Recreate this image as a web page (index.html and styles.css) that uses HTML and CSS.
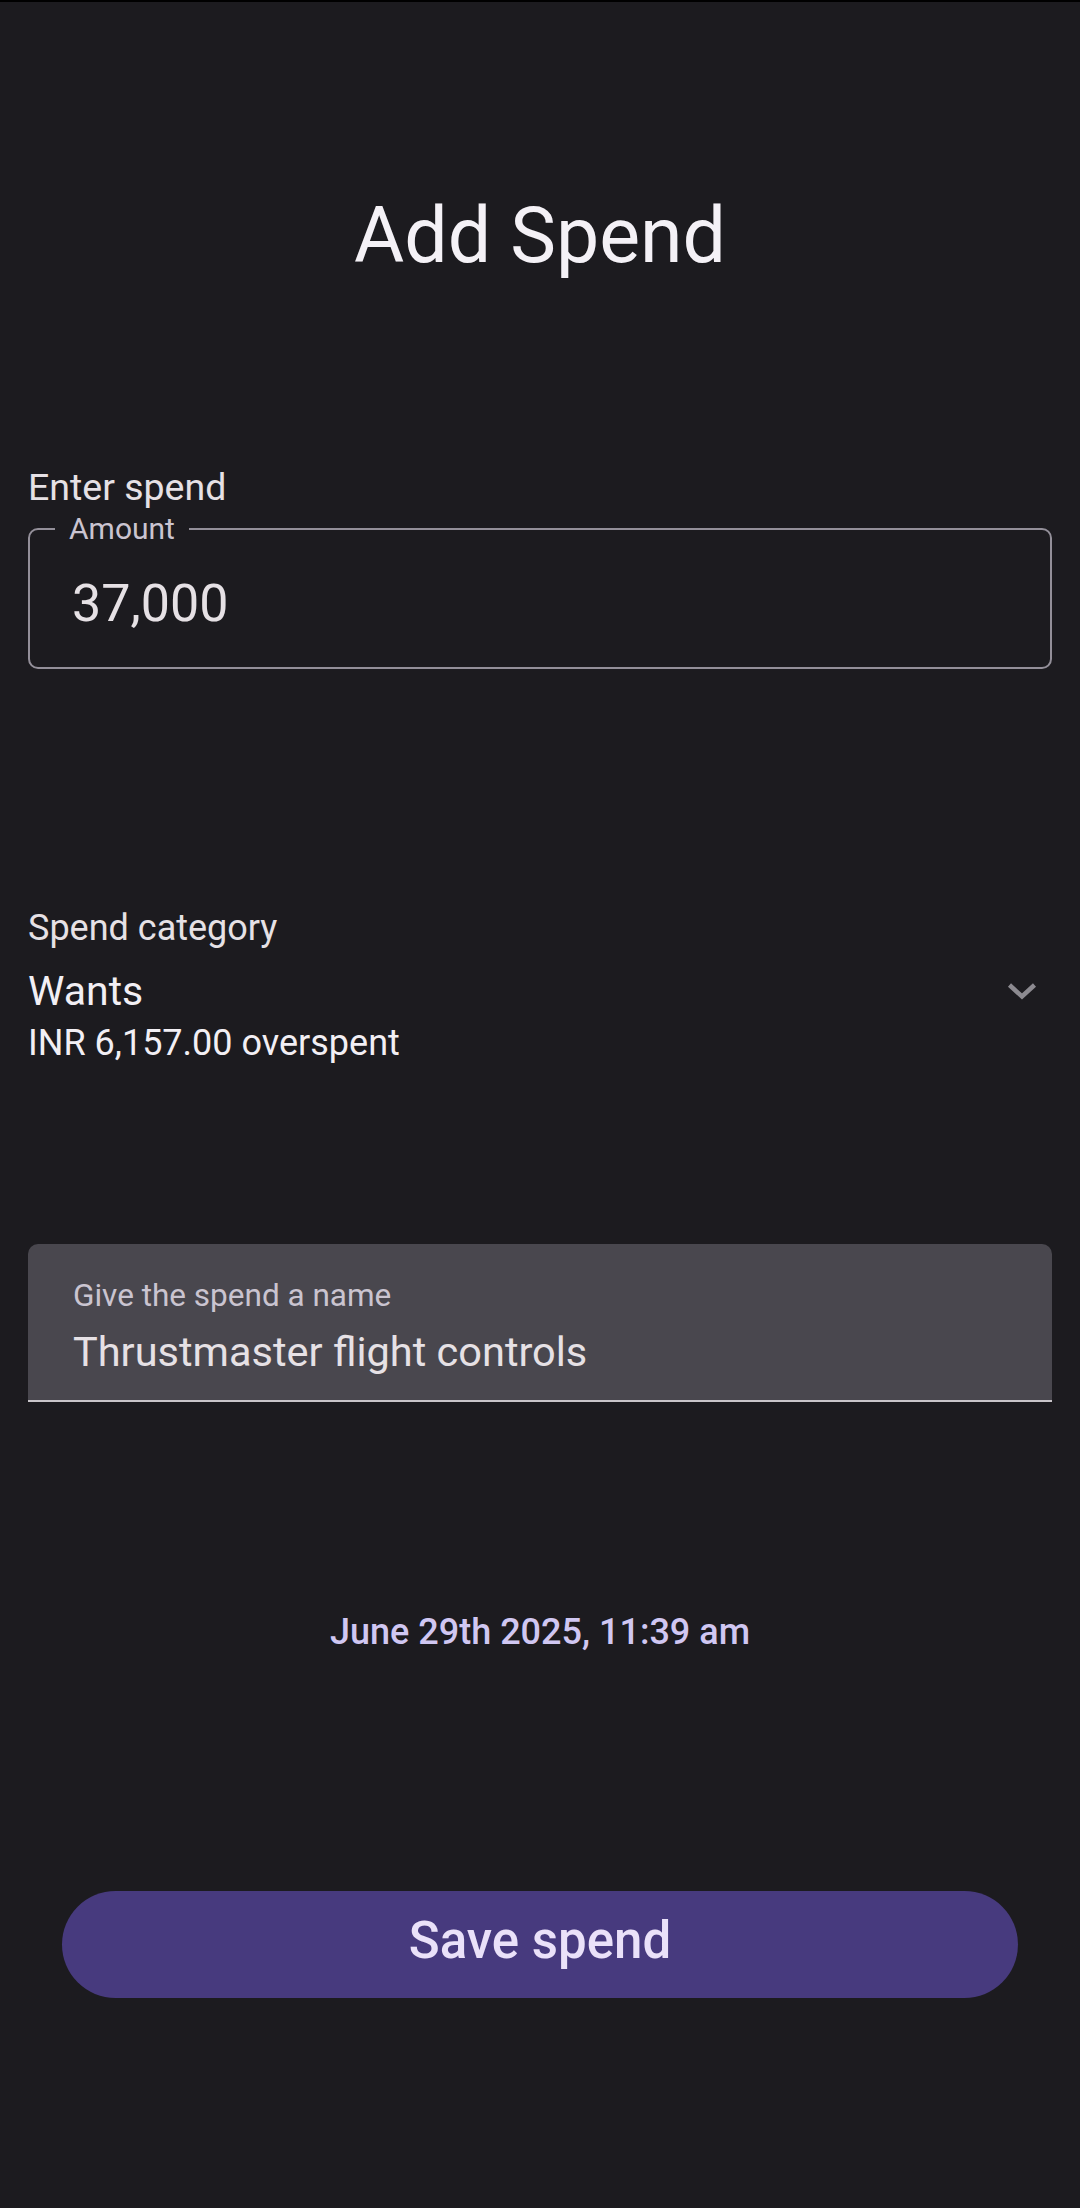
FILE: index.html
```html
<!DOCTYPE html>
<html lang="en">
<head>
<meta charset="utf-8">
<title>Add Spend</title>
<link rel="stylesheet" href="styles.css">
</head>
<body>
<div class="topline"></div>
<main class="screen">
  <h1 class="title">Add Spend</h1>

  <div class="field-label">Enter spend</div>
  <div class="outlined">
    <span class="outlined-label">Amount</span>
    <div class="outlined-value">37,000</div>
  </div>

  <div class="cat-label">Spend category</div>
  <div class="cat-row">
    <span class="cat-value">Wants</span>
    <svg class="chevron" width="60" height="48" viewBox="0 0 60 48" aria-hidden="true">
      <polyline points="17.5,18 30,29.5 42.5,18" fill="none" stroke="#8c8a90" stroke-width="4.5" stroke-linecap="butt" stroke-linejoin="miter"/>
    </svg>
  </div>
  <div class="cat-note">INR 6,157.00 overspent</div>

  <div class="filled">
    <div class="filled-label">Give the spend a name</div>
    <div class="filled-value">Thrustmaster flight controls</div>
  </div>

  <div class="date">June 29th 2025, 11:39 am</div>

  <button class="save" type="button">Save spend</button>
</main>
</body>
</html>
```

FILE: styles.css
```css
html, body {
  margin: 0;
  padding: 0;
  background: #1c1b1f;
}

body {
  width: 1080px;
  min-height: 2208px;
  font-family: Roboto, "Noto Sans", "Liberation Sans", sans-serif;
  color: #e6e1e5;
}

.topline {
  height: 2px;
  background: #000;
}

.screen {
  display: flex;
  flex-direction: column;
  padding: 0 28px;
}

.title {
  margin: 186px 0 0;
  font-size: 77px;
  line-height: 96px;
  font-weight: 400;
  text-align: center;
  color: #f4f1f6;
}

.field-label {
  margin-top: 181px;
  font-size: 37.5px;
  line-height: 44px;
  color: #e6e1e5;
}

.outlined {
  position: relative;
  margin-top: 19px;
  height: 141px;
  box-sizing: border-box;
  border: 2px solid #938f99;
  border-radius: 10px;
  padding: 44px 42px 0;
}

.outlined-label {
  position: absolute;
  top: -19px;
  left: 25px;
  padding: 0 14px;
  background: #1c1b1f;
  font-size: 30px;
  line-height: 36px;
  color: #cac4d0;
}

.outlined-value {
  font-size: 52px;
  line-height: 60px;
  color: #e6e1e5;
}

.cat-label {
  margin-top: 238px;
  font-size: 36px;
  line-height: 42px;
  color: #e6e1e5;
}

.cat-row {
  margin-top: 18px;
  height: 48px;
  display: flex;
  align-items: center;
  justify-content: space-between;
}

.cat-value {
  font-size: 41px;
  line-height: 48px;
  color: #f2eff4;
}

.chevron {
  display: block;
  flex: none;
}

.cat-note {
  margin-top: 7px;
  font-size: 36px;
  line-height: 42px;
  color: #f2eff4;
}

.filled {
  margin-top: 180px;
  background: #49474e;
  border-radius: 10px 10px 0 0;
  border-bottom: 2px solid #c9c5ca;
  padding: 34px 45px 24px;
  display: flex;
  flex-direction: column;
  gap: 14px;
}

.filled-label {
  font-size: 31.5px;
  line-height: 36px;
  color: #cac4d0;
}

.filled-value {
  font-size: 41.5px;
  line-height: 48px;
  color: #e6e1e5;
}

.date {
  margin-top: 209px;
  font-size: 36px;
  line-height: 42px;
  font-weight: 500;
  text-align: center;
  color: #d0c7f2;
}

.save {
  margin: 238px 34px 0;
  height: 107px;
  border: none;
  border-radius: 54px;
  background: #473a7e;
  color: #eae1f9;
  font-family: Roboto, "Noto Sans", "Liberation Sans", sans-serif;
  font-size: 51px;
  font-weight: 500;
  line-height: 60px;
  padding: 0 0 7px;
  display: flex;
  align-items: center;
  justify-content: center;
}
```
